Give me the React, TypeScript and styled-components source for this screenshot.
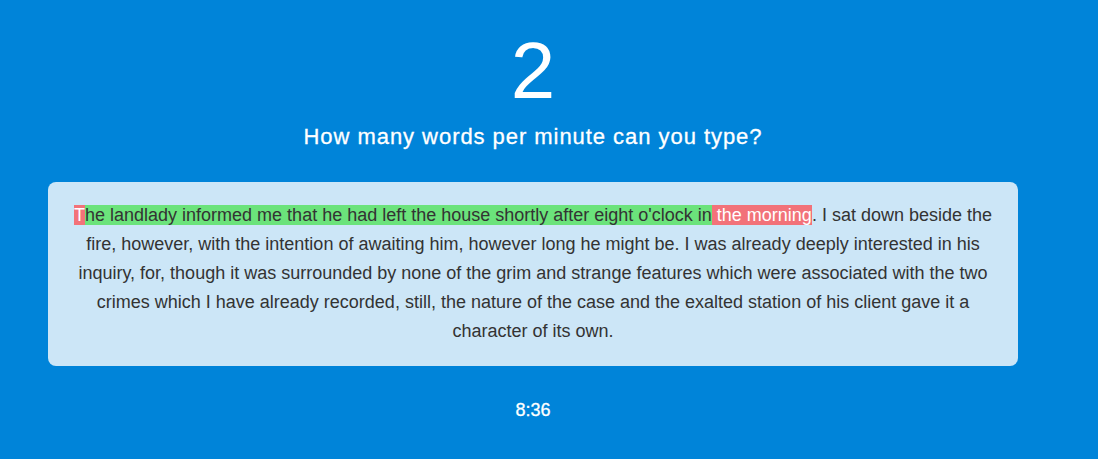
import styled, { createGlobalStyle } from 'styled-components';

const GlobalStyle = createGlobalStyle`
  html, body {
    margin: 0;
    padding: 0;
    background: #0084d9;
  }
  body {
    font-family: "Liberation Sans", Arial, Helvetica, sans-serif;
  }
`;

const Page = styled.main`
  width: 1066px;
  min-height: 459px;
  box-sizing: border-box;
  padding-top: 31px;
  color: #fff;
  text-align: center;
`;

const Counter = styled.h1`
  margin: 0;
  font-size: 80px;
  font-weight: normal;
  line-height: 1;
`;

const Subtitle = styled.h2`
  margin: 15px 0 0;
  font-size: 22px;
  font-weight: normal;
  letter-spacing: 0.95px;
  line-height: 1;
  -webkit-text-stroke: 0.3px #fff;
`;

const Card = styled.section`
  margin: 34px 48px 0;
  padding: 19px 22px 20px;
  border-radius: 8px;
  background: #cce6f7;
  color: #333;
  font-size: 18px;
  line-height: 29px;
`;

const Mark = styled.span<{ $ok?: boolean }>`
  background: ${p => (p.$ok ? '#6be37b' : '#f27279')};
  color: ${p => (p.$ok ? '#333' : '#fff')};
`;

const Timer = styled.div`
  margin-top: 35px;
  font-size: 18px;
  line-height: 1;
  -webkit-text-stroke: 0.3px #fff;
`;

export default function App() {
  return (
    <>
      <GlobalStyle />
      <Page>
        <Counter>2</Counter>
        <Subtitle>How many words per minute can you type?</Subtitle>
        <Card>
          <Mark>T</Mark>
          <Mark $ok>he landlady informed me that he had left the house shortly after eight o'clock in</Mark>
          <Mark> the morning</Mark>
          . I sat down beside the fire, however, with the intention of awaiting him, however long he might be.
          I was already deeply interested in his inquiry, for, though it was surrounded by none of the grim and
          strange features which were associated with the two crimes which I have already recorded, still, the
          nature of the case and the exalted station of his client gave it a character of its own.
        </Card>
        <Timer>8:36</Timer>
      </Page>
    </>
  );
}
